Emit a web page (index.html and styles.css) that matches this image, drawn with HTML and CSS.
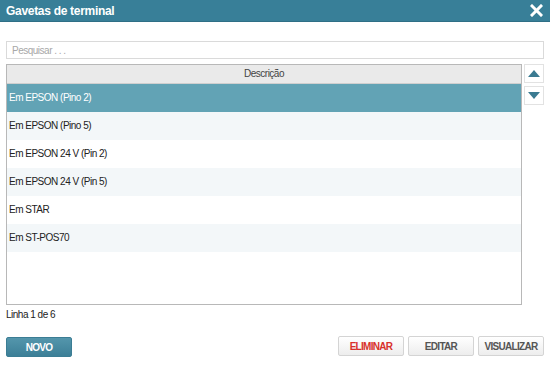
FILE: index.html
```html
<html>
	<head>
		<meta charset="utf-8">
		<title>Gavetas de terminal</title>
		<link rel="stylesheet" href="styles.css">
	</head>
	<body>
		<div class="dlg-Header">
			<div class="dlg-Header-Title">Gavetas de terminal</div>
			<div class="dlg-Close" title="Fechar">
				<svg width="13" height="13" viewBox="0 0 13 13"><path d="M2 2 L11 11 M11 2 L2 11" stroke="#FFFFFF" stroke-width="3" stroke-linecap="square"/></svg>
			</div>
		</div>

		<div class="dlg-Main">
			<input class="dlg-Search" type="text" placeholder="Pesquisar . . .">

			<div class="dlg-GridArea">
				<div class="dlg-Grid">
					<div class="dlg-Grid-Head">Descrição</div>
					<div class="dlg-Grid-Row selected">Em EPSON (Pino 2)</div>
					<div class="dlg-Grid-Row alt">Em EPSON (Pino 5)</div>
					<div class="dlg-Grid-Row">Em EPSON 24 V (Pin 2)</div>
					<div class="dlg-Grid-Row alt">Em EPSON 24 V (Pin 5)</div>
					<div class="dlg-Grid-Row">Em STAR</div>
					<div class="dlg-Grid-Row alt">Em ST-POS70</div>
				</div>
				<div class="dlg-Move">
					<button class="dlg-Move-Button" type="button">
						<svg width="12" height="7" viewBox="0 0 12 7"><path d="M0 7 L6 0 L12 7 Z" fill="#3A7A91"/></svg>
					</button>
					<button class="dlg-Move-Button" type="button">
						<svg width="12" height="7" viewBox="0 0 12 7"><path d="M0 0 L12 0 L6 7 Z" fill="#3A7A91"/></svg>
					</button>
				</div>
			</div>

			<div class="dlg-Status">Linha 1 de 6</div>

			<div class="dlg-Footer">
				<button class="dlg-Button primary" type="button">NOVO</button>
				<div class="dlg-Footer-Right">
					<button class="dlg-Button danger" type="button">ELIMINAR</button>
					<button class="dlg-Button" type="button">EDITAR</button>
					<button class="dlg-Button" type="button">VISUALIZAR</button>
				</div>
			</div>
		</div>
	</body>
</html>
```

FILE: styles.css
```css
body
{
	margin: 0px;
	font-family: "Liberation Sans", Arial, sans-serif;
	font-size: 10px;
	letter-spacing: -0.5px;
	color: #333333;
	background-color: #FFFFFF;
}

.dlg-Header
{
	height: 21px;
	background-color: #387F98;
	display: flex;
	align-items: center;
	justify-content: space-between;
	padding: 0px 7px 0px 6px;
	border-bottom: 1px solid #2F6F86;
}

.dlg-Header-Title
{
	color: #FFFFFF;
	font-size: 12px;
	font-weight: bold;
	letter-spacing: -0.3px;
}

.dlg-Close
{
	display: flex;
	cursor: pointer;
}

.dlg-Main
{
	padding: 19px 6px 0px 6px;
}

.dlg-Search
{
	display: block;
	width: 100%;
	height: 18px;
	box-sizing: border-box;
	border: 1px solid #DADADA;
	padding: 0px 5px;
	font-family: "Liberation Sans", Arial, sans-serif;
	font-size: 10px;
	letter-spacing: -0.5px;
	color: #333333;
	outline: none;
}

.dlg-Search::placeholder
{
	color: #A8A8A8;
}

.dlg-GridArea
{
	display: flex;
	gap: 2px;
	margin-top: 5px;
}

.dlg-Grid
{
	flex: 1;
	height: 241px;
	box-sizing: border-box;
	border: 1px solid #B8B8B8;
	overflow: hidden;
}

.dlg-Grid-Head
{
	height: 18px;
	line-height: 18px;
	text-align: center;
	background-color: #EAEAEA;
	border-bottom: 1px solid #CFCFCF;
	color: #444444;
}

.dlg-Grid-Row
{
	height: 28px;
	line-height: 27px;
	padding-left: 2px;
	color: #222222;
	background-color: #FFFFFF;
}

.dlg-Grid-Row.alt
{
	background-color: #F3F7F9;
}

.dlg-Grid-Row.selected
{
	background-color: #62A3B5;
	color: #FFFFFF;
}

.dlg-Move
{
	display: flex;
	flex-direction: column;
	gap: 3px;
}

.dlg-Move-Button
{
	width: 20px;
	height: 19px;
	padding: 0px;
	border: 1px solid #E2E2E2;
	background-color: #FFFFFF;
	display: flex;
	align-items: center;
	justify-content: center;
	cursor: pointer;
}

.dlg-Status
{
	margin-top: 3px;
	height: 15px;
	line-height: 14px;
	color: #222222;
}

.dlg-Footer
{
	display: flex;
	justify-content: space-between;
	margin-top: 14px;
}

.dlg-Footer-Right
{
	display: flex;
	gap: 4px;
	margin-top: -1px;
}

.dlg-Button
{
	width: 66px;
	height: 20px;
	padding: 0px;
	border: 1px solid #D4D4D4;
	border-radius: 2px;
	background: linear-gradient(#FFFFFF, #EDEDED);
	font-family: "Liberation Sans", Arial, sans-serif;
	font-size: 10px;
	font-weight: bold;
	letter-spacing: -0.7px;
	color: #555555;
	cursor: pointer;
}

.dlg-Button.danger
{
	color: #D8312C;
}

.dlg-Button.primary
{
	color: #FFFFFF;
	border: 1px solid #3B7D94;
	background: linear-gradient(#5496AC, #3C7F97);
}
```
